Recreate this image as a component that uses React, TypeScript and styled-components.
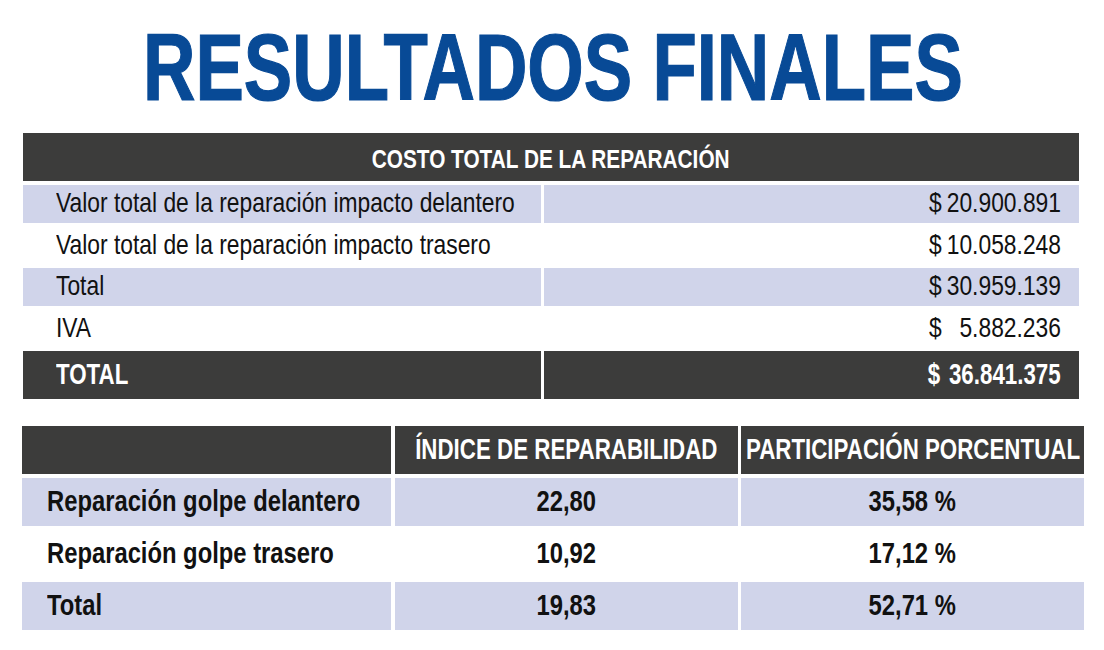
import React from "react";
import styled, { createGlobalStyle } from "styled-components";

const GlobalStyle = createGlobalStyle`
  html, body {
    margin: 0;
    padding: 0;
    background: #ffffff;
  }
  body {
    font-family: "Liberation Sans", Arial, sans-serif;
    color: #111111;
  }
`;

const DARK = "#3c3c3b";
const LIGHT = "#d0d4ea";
const BLUE = "#084a96";

type Tone = "dark" | "light" | "plain";
type Align = "left" | "center" | "right";

const Page = styled.div`
  width: 1104px;
  height: 650px;
  box-sizing: border-box;
  padding: 22px 20px 0 22px;
  display: flex;
  flex-direction: column;
  overflow: hidden;
`;

const Title = styled.h1`
  margin: 0 0 19px;
  height: 92px;
  display: flex;
  justify-content: center;
  font-size: 94px;
  line-height: 92px;
  font-weight: 700;
  color: ${BLUE};
  -webkit-text-stroke: 1.2px ${BLUE};
`;

const Squeeze = styled.span<{ $scale: number; $origin: Align }>`
  display: inline-block;
  white-space: nowrap;
  transform: scaleX(${(p) => p.$scale});
  transform-origin: ${(p) => p.$origin} center;
`;

const CostTable = styled.div`
  margin-left: 1px;
  width: 1056px;
  display: grid;
  grid-template-columns: 518px 535px;
  column-gap: 3px;
  row-gap: 3.5px;
  grid-template-rows: 48px repeat(4, 38px) 48px;
`;

const ResultTable = styled.div`
  margin-top: 27.5px;
  width: 1062px;
  display: grid;
  grid-template-columns: 369px 343px 343px;
  column-gap: 3.5px;
  row-gap: 4px;
  grid-template-rows: repeat(4, 48px);
`;

const Cell = styled.div<{ $tone: Tone; $align: Align; $padL?: number; $padR?: number; $padT?: number; $span?: boolean }>`
  display: flex;
  align-items: center;
  justify-content: ${(p) => (p.$align === "left" ? "flex-start" : p.$align === "right" ? "flex-end" : "center")};
  box-sizing: border-box;
  padding-left: ${(p) => p.$padL ?? 0}px;
  padding-right: ${(p) => p.$padR ?? 0}px;
  padding-top: ${(p) => p.$padT ?? 0}px;
  background: ${(p) => (p.$tone === "dark" ? DARK : p.$tone === "light" ? LIGHT : "transparent")};
  color: ${(p) => (p.$tone === "dark" ? "#ffffff" : "#111111")};
  grid-column: ${(p) => (p.$span ? "1 / -1" : "auto")};
  min-width: 0;
`;

const Label = styled.span<{ $size: number; $bold?: boolean }>`
  font-size: ${(p) => p.$size}px;
  line-height: 1.15;
  font-weight: ${(p) => (p.$bold ? 700 : 400)};
`;

const Money = styled.span<{ $width: number; $scale: number; $size: number; $bold?: boolean }>`
  display: inline-flex;
  justify-content: space-between;
  white-space: nowrap;
  width: ${(p) => p.$width / p.$scale}px;
  flex-shrink: 0;
  font-size: ${(p) => p.$size}px;
  line-height: 1.15;
  font-weight: ${(p) => (p.$bold ? 700 : 400)};
  transform: scaleX(${(p) => p.$scale});
  transform-origin: right center;
`;

const costRows: { label: string; value: string; tone: Tone }[] = [
  { label: "Valor total de la reparación impacto delantero", value: "20.900.891", tone: "light" },
  { label: "Valor total de la reparación impacto trasero", value: "10.058.248", tone: "plain" },
  { label: "Total", value: "30.959.139", tone: "light" },
  { label: "IVA", value: "5.882.236", tone: "plain" },
];

const resultRows: { label: string; index: string; share: string; tone: Tone }[] = [
  { label: "Reparación golpe delantero", index: "22,80", share: "35,58 %", tone: "light" },
  { label: "Reparación golpe trasero", index: "10,92", share: "17,12 %", tone: "plain" },
  { label: "Total", index: "19,83", share: "52,71 %", tone: "light" },
];

const REG = 0.815;
const BOLD = 0.77;
const BODY_BOLD = 0.82;

export default function App() {
  return (
    <>
      <GlobalStyle />
      <Page>
        <Title>
          <Squeeze $scale={0.772} $origin="center">RESULTADOS FINALES</Squeeze>
        </Title>

        <CostTable>
          <Cell $tone="dark" $align="center" $span $padT={5}>
            <Squeeze $scale={0.8} $origin="center">
              <Label $size={26} $bold>COSTO TOTAL DE LA REPARACIÓN</Label>
            </Squeeze>
          </Cell>
          {costRows.map((r) => (
            <React.Fragment key={r.label}>
              <Cell $tone={r.tone} $align="left" $padL={33}>
                <Squeeze $scale={REG} $origin="left">
                  <Label $size={28}>{r.label}</Label>
                </Squeeze>
              </Cell>
              <Cell $tone={r.tone} $align="right" $padR={18}>
                <Money $width={132} $scale={REG} $size={28}>
                  <span>$</span>
                  <span>{r.value}</span>
                </Money>
              </Cell>
            </React.Fragment>
          ))}
          <Cell $tone="dark" $align="left" $padL={33}>
            <Squeeze $scale={BOLD} $origin="left">
              <Label $size={29} $bold>TOTAL</Label>
            </Squeeze>
          </Cell>
          <Cell $tone="dark" $align="right" $padR={18}>
            <Money $width={133} $scale={BOLD} $size={29} $bold>
              <span>$</span>
              <span>36.841.375</span>
            </Money>
          </Cell>
        </CostTable>

        <ResultTable>
          <Cell $tone="dark" $align="center" />
          <Cell $tone="dark" $align="center">
            <Squeeze $scale={BOLD} $origin="center">
              <Label $size={29} $bold>ÍNDICE DE REPARABILIDAD</Label>
            </Squeeze>
          </Cell>
          <Cell $tone="dark" $align="center">
            <Squeeze $scale={BOLD} $origin="center">
              <Label $size={29} $bold>PARTICIPACIÓN PORCENTUAL</Label>
            </Squeeze>
          </Cell>
          {resultRows.map((r) => (
            <React.Fragment key={r.label}>
              <Cell $tone={r.tone} $align="left" $padL={25}>
                <Squeeze $scale={BODY_BOLD} $origin="left">
                  <Label $size={29} $bold>{r.label}</Label>
                </Squeeze>
              </Cell>
              <Cell $tone={r.tone} $align="center">
                <Squeeze $scale={BODY_BOLD} $origin="center">
                  <Label $size={29} $bold>{r.index}</Label>
                </Squeeze>
              </Cell>
              <Cell $tone={r.tone} $align="center">
                <Squeeze $scale={BODY_BOLD} $origin="center">
                  <Label $size={29} $bold>{r.share}</Label>
                </Squeeze>
              </Cell>
            </React.Fragment>
          ))}
        </ResultTable>
      </Page>
    </>
  );
}
